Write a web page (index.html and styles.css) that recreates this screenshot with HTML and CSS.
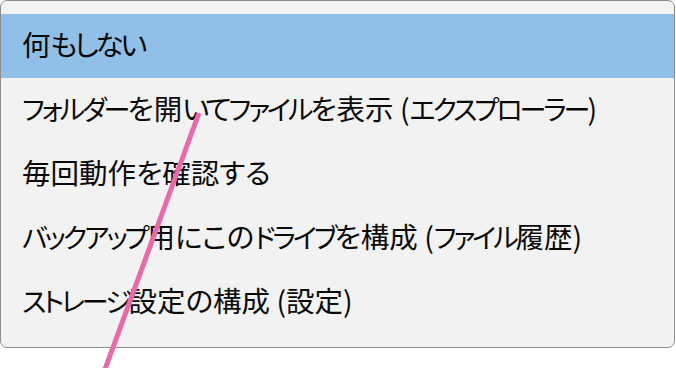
FILE: index.html
```html
<!DOCTYPE html>
<html lang="ja">
<head>
<meta charset="utf-8">
<link rel="stylesheet" href="styles.css">
</head>
<body>
<div class="stage">
  <div class="menu">
    <div class="item selected">何<span class="hira">もしない</span></div>
    <div class="item"><span class="kata">フォルダー</span>を開<span class="hira">いて</span><span class="kata">ファイル</span>を表示 (<span class="kata">エクスプローラー</span>)</div>
    <div class="item">毎回動作を確認する</div>
    <div class="item"><span class="kata">バックアップ</span>用にこの<span class="kata">ドライブ</span>を構成 (<span class="kata">ファイル</span>履歴)</div>
    <div class="item"><span class="kata">ストレージ</span>設定の構成 (設定)</div>
  </div>
  <svg class="pointer" width="676" height="368" viewBox="0 0 676 368">
    <line x1="199" y1="113" x2="104" y2="372" stroke="#e96aa9" stroke-width="5"/>
  </svg>
</div>
</body>
</html>
```

FILE: styles.css
```css
html, body {
  margin: 0;
  padding: 0;
  background: #ffffff;
}
.stage {
  position: relative;
  width: 676px;
  height: 368px;
  overflow: hidden;
}
.menu {
  box-sizing: border-box;
  width: 675px;
  height: 348px;
  border: 1px solid #8c8c8c;
  border-radius: 7px;
  background: #f2f2f2;
  padding-top: 13px;
  display: flex;
  flex-direction: column;
  font-family: "Noto Sans CJK JP", "Noto Sans", sans-serif;
  font-feature-settings: "palt";
  font-size: 28.5px;
  color: #0a0a0a;
}
.item {
  height: 64px;
  line-height: 59px;
  padding-left: 21px;
  white-space: nowrap;
}
.item.selected {
  background: #90c0e8;
}
.kata {
  font-size: 0.95em;
  letter-spacing: -3px;
}
.hira {
  letter-spacing: -3px;
}
.pointer {
  position: absolute;
  left: 0;
  top: 0;
  pointer-events: none;
}
```
